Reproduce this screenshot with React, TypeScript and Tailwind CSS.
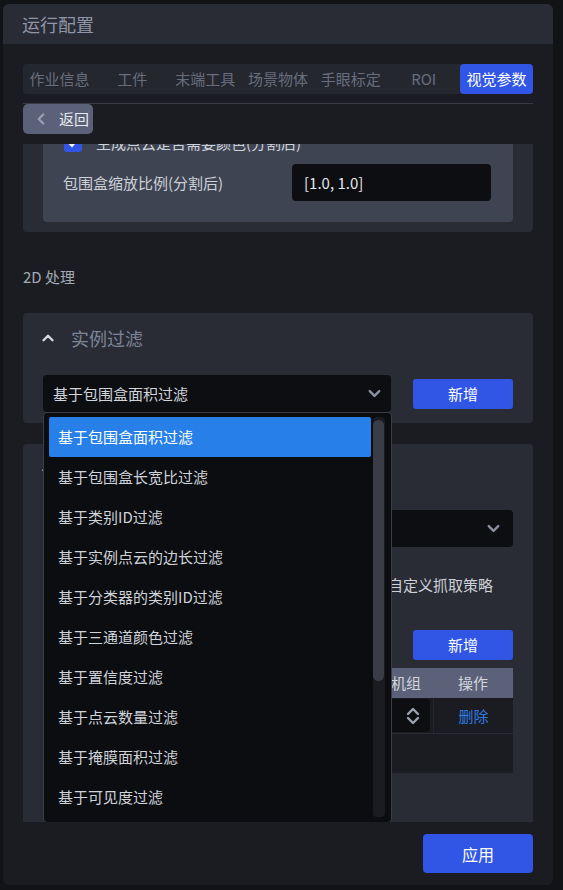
import { ChevronLeft, ChevronUp, ChevronDown } from "lucide-react";

const tabs = ["作业信息", "工件", "末端工具", "场景物体", "手眼标定", "ROI", "视觉参数"];
const options = [
  "基于包围盒面积过滤",
  "基于包围盒长宽比过滤",
  "基于类别ID过滤",
  "基于实例点云的边长过滤",
  "基于分类器的类别ID过滤",
  "基于三通道颜色过滤",
  "基于置信度过滤",
  "基于点云数量过滤",
  "基于掩膜面积过滤",
  "基于可见度过滤",
];

function UpDown() {
  return (
    <svg width="14" height="18" viewBox="0 0 14 18" fill="none" stroke="#9ca3af" strokeWidth="2.4" strokeLinecap="round" strokeLinejoin="round">
      <polyline points="2,7 7,2 12,7" />
      <polyline points="2,11 7,16 12,11" />
    </svg>
  );
}

export default function App() {
  return (
    <div className="w-[563px] h-[890px] bg-[#121317] pt-[4px] pl-[3px] font-['Noto_Sans_CJK_SC','Noto_Sans',sans-serif] text-[15px] leading-[20px]">
      <div className="w-[550px] h-[881px] rounded-[6px] bg-[#1b1c21] overflow-hidden flex flex-col">
        {/* header */}
        <div className="h-[40px] shrink-0 bg-[#2a2c35] flex items-center pl-[19px] text-[18px] text-[#8e96a8]">运行配置</div>

        {/* tabs + back */}
        <div className="px-[20px] pt-[20px] shrink-0">
          <div className="flex h-[30px] rounded-[4px] bg-[#25272f]">
            {tabs.map((t, i) =>
              i === tabs.length - 1 ? (
                <div key={t} className="flex-1 flex items-center justify-center rounded-[4px] bg-[#3156e6] text-white">
                  {t}
                </div>
              ) : (
                <div key={t} className="flex-1 flex items-center justify-center text-[#676e7e]">
                  {t}
                </div>
              )
            )}
          </div>
          <div className="mt-[9px] h-px bg-[#383a44]" />
          <div className="h-[40px]">
            <div className="w-[70px] h-[30px] rounded-[5px] bg-[#5b6178] flex items-center pl-[9px] gap-[9px] text-[#e8eaef]">
              <ChevronLeft size={18} strokeWidth={3} color="#9aa0b2" />
              <span>返回</span>
            </div>
          </div>
        </div>

        {/* scroll area */}
        <div className="h-[678px] shrink-0 overflow-hidden px-[20px]">
          <div className="-mt-[95px]">
            {/* card 1 */}
            <div className="rounded-[4px] bg-[#2a2c35] px-[20px] pt-[20px] pb-[10px]">
              <div className="rounded-[4px] bg-[#3f4453] pl-[20px] pr-[22px] pt-[16px] pb-[21px] flex flex-col gap-[12px]">
                <div className="h-[37px] flex items-center justify-between">
                  <span className="text-[#cdd1d8]">点云降采样尺寸(分割后)</span>
                  <div className="w-[199px] h-[37px] rounded-[4px] bg-[#0d0e12] flex items-center pl-[12px] text-[#e5e7eb]">0.005</div>
                </div>
                <div className="h-[18px] flex items-center gap-[14px] pl-[1px]">
                  <div className="w-[18px] h-[18px] rounded-[3px] bg-[#3156e6] flex items-center justify-center">
                    <svg width="12" height="12" viewBox="0 0 12 12" fill="none" stroke="white" strokeWidth="2">
                      <polyline points="2,6 5,9 10,3" />
                    </svg>
                  </div>
                  <span className="text-[#cdd1d8]">生成点云是否需要颜色(分割后)</span>
                </div>
                <div className="h-[37px] flex items-center justify-between">
                  <span className="text-[#cdd1d8]">包围盒缩放比例(分割后)</span>
                  <div className="w-[199px] h-[37px] rounded-[4px] bg-[#0d0e12] flex items-center pl-[12px] text-[#e5e7eb]">[1.0, 1.0]</div>
                </div>
              </div>
            </div>

            {/* 2D */}
            <div className="mt-[35px] h-[20px] text-[15px] text-[#a3a9b6]">2D 处理</div>

            {/* card 2 */}
            <div className="relative z-10 mt-[26px] rounded-[4px] bg-[#2a2c35] px-[20px] pt-[13px] pb-[11px]">
              <div className="h-[24px] flex items-center gap-[14px]">
                <ChevronUp size={18} strokeWidth={3.2} color="#d5d8df" className="-ml-[4px]" />
                <span className="text-[18px] text-[#7d8597]">实例过滤</span>
              </div>
              <div className="mt-[25px] flex items-center gap-[22px]">
                <div className="flex-1 h-[37px] rounded-[4px] bg-[#0d0e12] flex items-center justify-between pl-[10px] pr-[7px] text-[#d1d5db]">
                  <span>基于包围盒面积过滤</span>
                  <ChevronDown size={19} strokeWidth={3} color="#8b90a0" />
                </div>
                <div className="w-[100px] h-[30px] rounded-[3px] bg-[#3156e6] flex items-center justify-center text-white">新增</div>
              </div>

              {/* dropdown */}
              <div className="absolute left-[20px] top-[99px] w-[349px] h-[411px] rounded-[4px] border border-[#3b3e48] bg-[#0c0d10] p-[4px] pl-[5px] flex gap-[2px]">
                <div className="w-[322px] flex flex-col">
                  {options.map((o, i) =>
                    i === 0 ? (
                      <div key={o} className="h-[40px] shrink-0 rounded-[2px] bg-[#2680e8] flex items-center pl-[9px] text-white">
                        {o}
                      </div>
                    ) : (
                      <div key={o} className="h-[40px] shrink-0 flex items-center pl-[9px] text-[#cfd3da]">
                        {o}
                      </div>
                    )
                  )}
                </div>
                <div className="w-[12px] h-[400px] rounded-[4px] bg-[#1b1c21] pt-[3px]">
                  <div className="w-[11px] h-[261px] rounded-full bg-[#3a3d48]" />
                </div>
              </div>
            </div>

            {/* card 3 */}
            <div className="mt-[21px] rounded-[4px] bg-[#2a2c35] px-[20px] pt-[12px] pb-[80px]">
              <div className="h-[24px] flex items-center gap-[14px]">
                <ChevronUp size={18} strokeWidth={3.2} color="#d5d8df" className="-ml-[4px]" />
                <span className="text-[18px] text-[#7d8597]">抓取策略</span>
              </div>
              <div className="mt-[30px] h-[37px] rounded-[4px] bg-[#0d0e12] flex items-center justify-between pl-[10px] pr-[10px] text-[#d1d5db]">
                <span>默认策略</span>
                <ChevronDown size={19} strokeWidth={3} color="#8b90a0" />
              </div>
              <div className="mt-[28px] h-[20px] flex justify-end pr-[20px] text-[#cdd1d8]">
                <span>是否使用自定义抓取策略</span>
              </div>
              <div className="mt-[35px] flex justify-end">
                <div className="w-[100px] h-[30px] rounded-[3px] bg-[#3156e6] flex items-center justify-center text-white">新增</div>
              </div>
              <div className="mt-[8px]">
                <div className="h-[30px] bg-[#5b6178] flex text-[#d3d6dd]">
                  <div className="w-[210px] flex items-center justify-center">名称</div>
                  <div className="w-[180px] flex items-center justify-end pr-[12px]">抓取机组</div>
                  <div className="w-[80px] flex items-center justify-center">操作</div>
                </div>
                <div className="h-[36px] bg-[#1b1c21] border-b border-[#2a2c33] flex">
                  <div className="w-[210px] flex items-center pl-[12px] text-[#d1d5db]">策略1</div>
                  <div className="w-[180px] flex items-center px-[3px]">
                    <div className="w-full h-[33px] rounded-[4px] bg-[#0d0e12] flex items-center justify-between pl-[10px] pr-[10px] text-[#d1d5db]">
                      <span>1</span>
                      <UpDown />
                    </div>
                  </div>
                  <div className="w-[80px] border-l border-[#25272d] flex items-center justify-center text-[#2f7de1]">删除</div>
                </div>
                <div className="h-[39px] bg-[#1b1c21]" />
              </div>
            </div>
          </div>
        </div>

        {/* footer */}
        <div className="shrink-0 flex justify-end pr-[20px] pt-[12px]">
          <div className="w-[110px] h-[39px] rounded-[4px] bg-[#3156e6] flex items-center justify-center text-[16px] text-white">应用</div>
        </div>
      </div>
    </div>
  );
}
